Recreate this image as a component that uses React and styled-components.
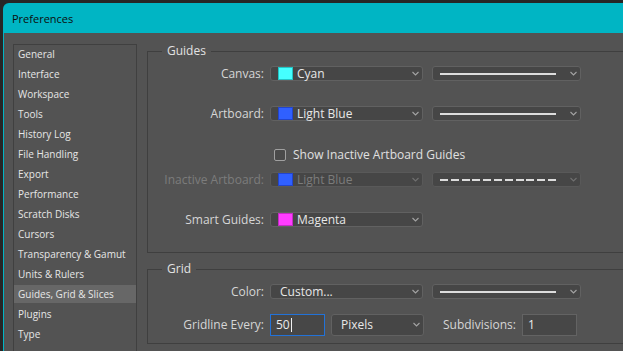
import React from "react";
import styled, { createGlobalStyle, css } from "styled-components";

const GlobalStyle = createGlobalStyle`
  html, body {
    margin: 0;
    padding: 0;
    background: #262626;
    overflow: hidden;
  }
  body {
    font-family: "Open Sans", "Noto Sans", sans-serif;
  }
`;

const Window = styled.div`
  margin: 3px 0 0 3px;
  width: 640px;
  height: 348px;
  border-top-left-radius: 6px;
  overflow: hidden;
  display: flex;
  flex-direction: column;
`;

const TitleBar = styled.div`
  height: 30px;
  flex-shrink: 0;
  background: #00b5c4;
  display: flex;
  align-items: center;
  padding-left: 9px;
  font-size: 11px;
  color: #0d0d0d;
`;

const WindowBody = styled.div`
  flex: 1;
  display: flex;
  align-items: flex-start;
  background: #535353;
  border-left: 1px solid #00b5c4;
  padding-left: 9px;
  overflow: hidden;
`;

const Sidebar = styled.ul`
  list-style: none;
  margin: 11px 0 0 0;
  padding: 0;
  width: 124px;
  height: 330px;
  flex-shrink: 0;
  box-sizing: border-box;
  border: 1px solid #404040;
`;

const SidebarItem = styled.li`
  height: 18px;
  line-height: 18px;
  margin-bottom: 2px;
  padding-left: 4px;
  font-size: 10px;
  color: #e6e6e6;
  white-space: nowrap;
  background: ${(p) => (p.$active ? "#676767" : "transparent")};
`;

const Main = styled.div`
  flex: 1;
  padding: 10px 0 0 10px;
`;

const Group = styled.fieldset`
  margin: ${(p) => p.$mt || 0}px 0 0 0;
  padding: 0 0 ${(p) => p.$pb}px 0;
  width: 520px;
  box-sizing: border-box;
  border: 1px solid #3f3f3f;
  min-inline-size: 0;
`;

const Legend = styled.legend`
  margin-left: 14px;
  padding: 0 5px;
  font-size: 12px;
  line-height: 16px;
  color: #e2e2e2;
`;

const Row = styled.div`
  display: flex;
  align-items: center;
  height: ${(p) => p.$h}px;
  margin-top: ${(p) => p.$mt}px;
`;

const Label = styled.span`
  width: 116px;
  margin-right: 6px;
  flex-shrink: 0;
  text-align: right;
  font-size: 12px;
  line-height: 16px;
  white-space: nowrap;
  color: ${(p) => (p.$disabled ? "#7c7c7c" : "#d6d6d6")};
`;

const SideLabel = styled.span`
  margin-left: 19px;
  font-size: 12px;
  line-height: 16px;
  color: #d6d6d6;
`;

const Select = styled.div`
  display: flex;
  align-items: center;
  box-sizing: border-box;
  width: ${(p) => p.$w}px;
  height: ${(p) => p.$h || 15}px;
  margin-left: ${(p) => p.$ml || 0}px;
  padding-left: ${(p) => p.$pl ?? 7}px;
  border: 1px solid ${(p) => (p.$disabled ? "#595959" : "#616161")};
  border-radius: 3px;
  background: #464646;
  flex-shrink: 0;
`;

const Swatch = styled.span`
  width: 15px;
  height: 13px;
  box-sizing: border-box;
  flex-shrink: 0;
  background: ${(p) => p.$color};
  border: 1px solid ${(p) => p.$edge};
`;

const SelectText = styled.span`
  margin-left: ${(p) => p.$ml ?? 4}px;
  font-size: 12px;
  line-height: 13px;
  white-space: nowrap;
  color: ${(p) => (p.$disabled ? "#7c7c7c" : "#e8e8e8")};
`;

const StrokeSample = styled.span`
  width: 116px;
  height: 2px;
  flex-shrink: 0;
  ${(p) =>
    p.$dashed
      ? css`
          background: repeating-linear-gradient(
            to right,
            #dcdcdc 0 8px,
            transparent 8px 10.8px
          );
        `
      : css`
          background: #dcdcdc;
        `}
`;

const ChevronWrap = styled.span`
  margin-left: auto;
  margin-right: 3px;
  display: flex;
  align-items: center;
  opacity: ${(p) => (p.$disabled ? 0.45 : 1)};
`;

const Chevron = ({ disabled }) => (
  <ChevronWrap $disabled={disabled}>
    <svg width="7" height="5" viewBox="0 0 7 5">
      <path d="M0.5 1 L3.5 4 L6.5 1" fill="none" stroke="#a3a3a3" strokeWidth="1.1" />
    </svg>
  </ChevronWrap>
);

const CheckRow = styled.label`
  display: flex;
  align-items: center;
  margin-left: 126px;
  font-size: 12px;
  line-height: 16px;
  color: #e0e0e0;
  white-space: nowrap;
`;

const CheckBox = styled.span`
  width: 12px;
  height: 12px;
  box-sizing: border-box;
  border: 1px solid #a0a0a0;
  border-radius: 2px;
  background: #4a4a4a;
  margin-right: 7px;
  flex-shrink: 0;
`;

const TextField = styled.div`
  display: flex;
  align-items: center;
  box-sizing: border-box;
  width: 55px;
  height: 22px;
  margin-left: ${(p) => p.$ml || 0}px;
  padding-left: 5px;
  border: 1px solid ${(p) => (p.$focused ? "#2272d8" : "#636363")};
  background: #474747;
  font-size: 12px;
  color: #ececec;
  flex-shrink: 0;
`;

const Caret = styled.span`
  width: 1px;
  height: 14px;
  margin-left: 1px;
  background: #f0f0f0;
`;

const navItems = [
  "General",
  "Interface",
  "Workspace",
  "Tools",
  "History Log",
  "File Handling",
  "Export",
  "Performance",
  "Scratch Disks",
  "Cursors",
  "Transparency & Gamut",
  "Units & Rulers",
  "Guides, Grid & Slices",
  "Plugins",
  "Type",
];

const ColorSelect = ({ color, edge, name, disabled }) => (
  <Select $w={153} $disabled={disabled}>
    <Swatch $color={color} $edge={edge} />
    <SelectText $disabled={disabled}>{name}</SelectText>
    <Chevron disabled={disabled} />
  </Select>
);

const StyleSelect = ({ dashed, disabled }) => (
  <Select $w={149} $ml={9} $pl={7} $disabled={disabled}>
    <StrokeSample $dashed={dashed} />
    <Chevron disabled={disabled} />
  </Select>
);

export default function App() {
  return (
    <>
      <GlobalStyle />
      <Window>
        <TitleBar>Preferences</TitleBar>
        <WindowBody>
          <Sidebar>
            {navItems.map((item) => (
              <SidebarItem key={item} $active={item === "Guides, Grid & Slices"}>
                {item}
              </SidebarItem>
            ))}
          </Sidebar>
          <Main>
            <Group $pb={25}>
              <Legend>Guides</Legend>
              <Row $mt={7} $h={15}>
                <Label>Canvas:</Label>
                <ColorSelect color="#45ffff" edge="#22c4c4" name="Cyan" />
                <StyleSelect />
              </Row>
              <Row $mt={25} $h={15}>
                <Label>Artboard:</Label>
                <ColorSelect color="#3060ff" edge="#2244cc" name="Light Blue" />
                <StyleSelect />
              </Row>
              <Row $mt={27} $h={14}>
                <CheckRow>
                  <CheckBox />
                  Show Inactive Artboard Guides
                </CheckRow>
              </Row>
              <Row $mt={10} $h={15}>
                <Label $disabled>Inactive Artboard:</Label>
                <ColorSelect color="#3060ff" edge="#2244cc" name="Light Blue" disabled />
                <StyleSelect dashed disabled />
              </Row>
              <Row $mt={25} $h={15}>
                <Label>Smart Guides:</Label>
                <ColorSelect color="#ff3cff" edge="#c42ac4" name="Magenta" />
              </Row>
            </Group>
            <Group $mt={8} $pb={7}>
              <Legend>Grid</Legend>
              <Row $mt={7} $h={15}>
                <Label>Color:</Label>
                <Select $w={153} $pl={9}>
                  <SelectText $ml={0}>Custom...</SelectText>
                  <Chevron />
                </Select>
                <StyleSelect />
              </Row>
              <Row $mt={14} $h={23}>
                <Label>Gridline Every:</Label>
                <TextField $focused>
                  50
                  <Caret />
                </TextField>
                <Select $w={93} $h={22} $ml={6} $pl={9}>
                  <SelectText $ml={0}>Pixels</SelectText>
                  <Chevron />
                </Select>
                <SideLabel>Subdivisions:</SideLabel>
                <TextField $ml={6}>1</TextField>
              </Row>
            </Group>
          </Main>
        </WindowBody>
      </Window>
    </>
  );
}
